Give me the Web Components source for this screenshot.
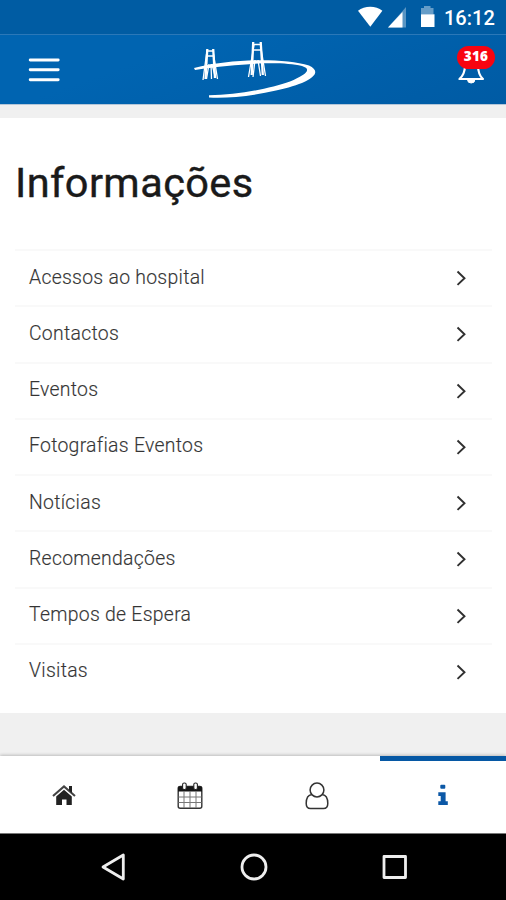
<!DOCTYPE html>
<html lang="pt">
<head>
<meta charset="utf-8">
<meta name="viewport" content="width=device-width, initial-scale=1">
<title>Informações</title>
<style>
    body{
        margin: 0;
        font-family: Roboto, "Liberation Sans", sans-serif;
    }
</style>
</head>
<body>
<info-app>
    <status-bar slot="top" time="16:12"></status-bar>
    <app-header slot="top" count="316"></app-header>
    <info-card heading="Informações">
        <info-row>Acessos ao hospital</info-row>
        <info-row>Contactos</info-row>
        <info-row>Eventos</info-row>
        <info-row>Fotografias Eventos</info-row>
        <info-row>Notícias</info-row>
        <info-row>Recomendações</info-row>
        <info-row>Tempos de Espera</info-row>
        <info-row>Visitas</info-row>
    </info-card>
    <tab-bar slot="bottom">
        <tab-item icon="home"></tab-item>
        <tab-item icon="calendar"></tab-item>
        <tab-item icon="user"></tab-item>
        <tab-item icon="info" active></tab-item>
    </tab-bar>
    <system-nav slot="bottom"></system-nav>
</info-app>

<script>
class BaseElement extends HTMLElement{
    constructor(){
        super();
        this.shadow = this.attachShadow({ mode: "open" });
    }

    connectedCallback(){
        this.shadow.innerHTML = this.render();
    }
}

class InfoApp extends BaseElement{
    render(){
        return `
            <style>
                :host{
                    display: flex;
                    flex-direction: column;
                    height: 900px;
                    overflow: hidden;
                    background: #f0f0f0;
                }
                main{
                    flex: 1;
                    padding-top: 13px;
                    border-top: 1px solid #b4c6d8;
                }
            </style>
            <slot name="top"></slot>
            <main><slot></slot></main>
            <slot name="bottom"></slot>
            `;
    }
}

class StatusBar extends BaseElement{
    render(){
        return `
            <style>
                :host{
                    display: flex;
                    justify-content: flex-end;
                    height: 34px;
                    background: #005ca3;
                    color: #fff;
                }
                svg{
                    display: block;
                    width: 82px;
                    height: 34px;
                }
                span{
                    width: 66px;
                    padding-left: 4px;
                    box-sizing: border-box;
                    font-size: 20px;
                    line-height: 37px;
                    font-weight: 500;
                }
            </style>
            <svg viewBox="0 0 82 34" fill="#fff">
                <path d="M0 10.700C6.500 5.400 18 5.400 24.400 10.700L12.300 26.800Z"/>
                <path d="M48 7v20.500H30z" opacity=".35"/>
                <path d="M44.500 12v15.500H30z"/>
                <path d="M63 14.500V8h3V6h6.500v2h3v6.500z" opacity=".4"/>
                <path d="M63 14.300h13.500V27H63z"/>
            </svg>
            <span>${this.getAttribute("time")}</span>
            `;
    }
}

class AppHeader extends BaseElement{
    render(){
        return `
            <style>
                :host{
                    display: grid;
                    grid-template-columns: 1fr auto 1fr;
                    align-items: center;
                    box-sizing: border-box;
                    height: 70px;
                    border-top: 1px solid #2b78b8;
                    background: linear-gradient(160deg, #0064b1 30%, #005ba4);
                }
                svg{
                    display: block;
                }
                .menu{
                    margin-left: 28px;
                }
                .logo{
                    margin-left: 4px;
                }
                .alerts{
                    position: relative;
                    justify-self: end;
                    width: 28px;
                    height: 26px;
                    margin: 3px 21px 0 0;
                }
                .badge{
                    position: absolute;
                    left: 0;
                    top: -12px;
                    width: 38px;
                    height: 23px;
                    border-radius: 12px;
                    background: #f80410;
                    color: #fff;
                    font: 800 13.500px/20px "Open Sans", sans-serif;
                    letter-spacing: 0.3px;
                    text-align: center;
                }
            </style>
            <svg class="menu" width="32" height="26" viewBox="0 0 32 26" stroke="#fff" stroke-width="2.900" stroke-linecap="round">
                <path d="M2.200 3h28M2.200 12.800h28M2.200 22.700h28"/>
            </svg>
            <svg class="logo" width="127" height="60" viewBox="0 0 127 60" fill="#fff">
                <!-- deck and its sweep back to the left -->
                <path d="M2 28C41 18 92 18 117 25.500C133 33 117 43.500 84 50.500C61 56 36 58.500 17 57.500V55.200C46 55 78 48.500 98 41.500C113 35 121 29.500 110 26C88 21 48 23.500 3 30Z"/>
                <!-- pylons and cables -->
                <g fill="none" stroke="#fff" stroke-width="1.300">
                    <path d="M14.500 11H22M15 16H21.500M17 24L14.500 39M19 24L19.500 39M20 24L23.500 38M14.500 14L11 40M21.500 14L25.500 39"/>
                    <path d="M60.500 4.500H69.500M61 10H69M63 20L61 37M66 20L68.500 36M62 5L56.500 37M68.500 5L73.500 36"/>
                    <path stroke-width="2.300" d="M15.300 9L13.500 39M21.200 9L23 38M61.200 2L59.700 35M68.700 2L70.800 35"/>
                </g>
            </svg>
            <div class="alerts">
                <svg width="28" height="26" viewBox="0 0 28 26" fill="none" stroke="#fff" stroke-width="2.100" stroke-linejoin="round">
                    <path d="M8 7C8 14 6 18 2.400 21H26C22.500 18 21 14 21 7"/>
                    <path d="M10.500 21.500a3.700 3.500 0 0 0 7.400 0z" fill="#fff" stroke-width="1"/>
                </svg>
                <span class="badge">${this.getAttribute("count")}</span>
            </div>
            `;
    }
}

class InfoCard extends BaseElement{
    render(){
        return `
            <style>
                :host{
                    display: block;
                    box-sizing: border-box;
                    height: 595px;
                    padding: 40px 14px 0 15px;
                    background: #fff;
                }
                h1{
                    margin: 0 0 41px;
                    color: #1a1a1a;
                    font-size: 41.500px;
                    line-height: 50px;
                    font-weight: 400;
                    letter-spacing: 0.400px;
                    -webkit-text-stroke: 0.400px #1a1a1a;
                }
            </style>
            <h1>${this.getAttribute("heading")}</h1>
            <slot></slot>
            `;
    }
}

class InfoRow extends BaseElement{
    render(){
        return `
            <style>
                :host{
                    display: flex;
                    justify-content: space-between;
                    align-items: center;
                    box-sizing: border-box;
                    height: 56.250px;
                    padding: 0 25px 0 14px;
                    border-top: 2px solid #f9f9f9;
                    color: #333;
                    font-size: 19.400px;
                    font-weight: 300;
                    letter-spacing: 0.280px;
                    -webkit-text-stroke: 0.150px #444;
                }
                span{
                    margin-top: -2px;
                }
            </style>
            <span><slot></slot></span>
            <svg width="12" height="18" viewBox="0 0 12 18" fill="none" stroke="#303030" stroke-width="1.900">
                <path d="M2.500 2.500l7 6.700-7 6.700"/>
            </svg>
            `;
    }
}

class TabBar extends BaseElement{
    render(){
        return `
            <style>
                :host{
                    display: flex;
                    height: 77px;
                    background: #fff;
                    border-bottom: 1px solid #777;
                    box-shadow: 0 -1px 3px rgba(0,0,0,.22);
                }
                ::slotted(*){
                    flex: 1;
                }
            </style>
            <slot></slot>
            `;
    }
}

const icons = {
    home: `
        <path d="M7.200 15.500L15 8.800l7.800 6.700V24h-5.300v-5.500h-4.500V24H7.200z" fill="#222"/>
        <path d="M4 15L15 5.500l11 9.500" fill="none" stroke="#444" stroke-width="2.100"/>
        <path d="M20 5h3V12l-3-2.600z" fill="#222"/>`,
    calendar: `
        <rect x="3.200" y="5.500" width="23.600" height="21.800" rx="2" fill="#fff" stroke="#333" stroke-width="1.400"/>
        <path d="M3 6.500q0-1 1-1h22q1 0 1 1V10.500H3z" fill="#161616"/>
        <path d="M9 10v17M15 10v17M21 10v17M3.500 16h23M3.500 21.500h23" stroke="#777" stroke-width="1"/>
        <rect x="7.600" y="2" width="3.600" height="6.500" rx="1.600" fill="#fff" stroke="#222" stroke-width="1.100"/>
        <rect x="18.800" y="2" width="3.600" height="6.500" rx="1.600" fill="#fff" stroke="#222" stroke-width="1.100"/>`,
    user: `
        <g fill="none" stroke="#333" stroke-width="1.500">
            <circle cx="15" cy="9" r="6.900"/>
            <path d="M9.800 13.500C5.500 14 4.200 18.500 4.200 22.500Q4.200 27.500 8.500 27.500H21.500Q25.800 27.500 25.800 22.500C25.800 18.500 24.500 14 20.200 13.500"/>
        </g>`,
    info: `
        <g fill="#0c58a6">
            <rect x="12.300" y="3.700" width="5" height="4.100" rx="1"/>
            <path d="M10.300 11.300h7.300v9h2.200V24H10.300v-3.700h2.400v-5.400h-2.400z"/>
        </g>`
};

class TabItem extends BaseElement{
    render(){
        return `
            <style>
                :host{
                    display: flex;
                    justify-content: center;
                    box-sizing: border-box;
                    padding: 20px 0 0 1px;
                    border-top: 5px solid transparent;
                }
                :host([active]){
                    border-top-color: #0658a4;
                }
            </style>
            <svg width="30" height="30" viewBox="0 0 30 30">${icons[this.getAttribute("icon")]}</svg>
            `;
    }
}

class SystemNav extends BaseElement{
    render(){
        return `
            <style>
                :host{
                    display: flex;
                    justify-content: center;
                    align-items: center;
                    gap: 110px;
                    height: 66px;
                    background: #000;
                }
                svg{
                    fill: none;
                    stroke: #eee;
                    stroke-width: 2.800px;
                    stroke-linejoin: round;
                }
            </style>
            <svg width="30" height="30" viewBox="0 0 30 30"><path d="M25.300 3v24L5 15z"/></svg>
            <svg width="30" height="30" viewBox="0 0 30 30"><circle cx="16" cy="15" r="12"/></svg>
            <svg width="30" height="30" viewBox="0 0 30 30"><path d="M6 4.500h21.500v21H6z"/></svg>
            `;
    }
}

window.customElements.define("info-app", InfoApp);
window.customElements.define("status-bar", StatusBar);
window.customElements.define("app-header", AppHeader);
window.customElements.define("info-card", InfoCard);
window.customElements.define("info-row", InfoRow);
window.customElements.define("tab-bar", TabBar);
window.customElements.define("tab-item", TabItem);
window.customElements.define("system-nav", SystemNav);
</script>
</body>
</html>
